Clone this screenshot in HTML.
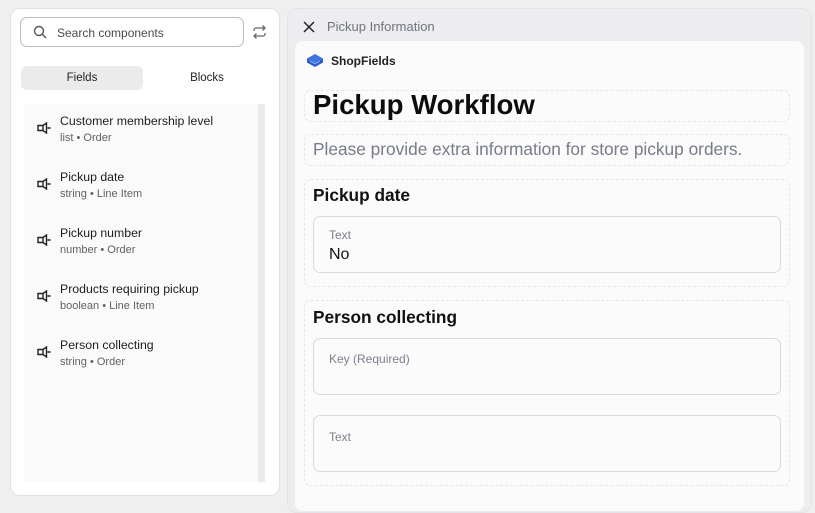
<!DOCTYPE html>
<html><head><style>
*{box-sizing:border-box;margin:0;padding:0}
body{width:815px;height:505px;background:#efeff0;font-family:"Liberation Sans",sans-serif;position:relative;overflow:hidden;color:#1a1a1a}
.a{position:absolute}
.left{left:10px;top:8px;width:270px;height:488px;background:#fff;border:1px solid #e2e2e4;border-radius:10px}
.search{left:20px;top:17px;width:224px;height:30px;border:1px solid #bdbdc2;border-radius:7px;font-size:12px;color:#4a4a4a}
.item{left:24px;width:234px;height:56px}
.item .t{position:absolute;left:36px;top:10px;font-size:12.3px;color:#1c1c1c}
.item .s{position:absolute;left:36px;top:28px;font-size:11px;color:#616161}
.item svg{position:absolute;left:13px;top:18px}
.dash{border:1px dashed #e6e6ea;border-radius:7px}
.field{border:1px solid #d9d9de;border-radius:7px;background:#fbfbfc}
.lbl{font-size:12px;color:#7b7f8e}
</style></head><body>
<div class="a left"></div>
<div class="a search">
<svg class="a" style="left:12px;top:7px" width="14" height="14" viewBox="0 0 14 14"><circle cx="6" cy="6" r="4.5" fill="none" stroke="#555" stroke-width="1.4"/><path d="M9.3 9.3L13 13" stroke="#555" stroke-width="1.4"/></svg>
<span class="a" style="left:36px;top:8px">Search components</span></div>
<svg class="a" style="left:252px;top:25px" width="15" height="14" viewBox="0 0 15 14" fill="none" stroke="#666" stroke-width="1.3"><path d="M2 6V5a2 2 0 0 1 2-2h9M10.5 0.5L13 3l-2.5 2.5M13 8v1a2 2 0 0 1-2 2H2M4.5 13.5L2 11l2.5-2.5"/></svg>
<div class="a" style="left:21px;top:66px;width:122px;height:24px;background:#ebebec;border-radius:6px;font-size:11.5px;text-align:center;line-height:24px;color:#222">Fields</div>
<div class="a" style="left:146px;top:66px;width:122px;height:24px;font-size:11.5px;text-align:center;line-height:24px;color:#222">Blocks</div>
<div class="a" style="left:24px;top:104px;width:241px;height:378px;background:#fafafa"></div>
<div class="a" style="left:258px;top:104px;width:7px;height:378px;background:#ebebeb"></div>
<div class="a item" style="top:104px"><svg width="14" height="12" viewBox="0 0 14 12" fill="none" stroke="#222" stroke-width="1.4"><path d="M1 3.5h5v5H1zM6 3.5L9.5 1v10L6 8.5M10.5 6h3"/></svg><div class="t">Customer membership level</div><div class="s">list • Order</div></div>
<div class="a item" style="top:160px"><svg width="14" height="12" viewBox="0 0 14 12" fill="none" stroke="#222" stroke-width="1.4"><path d="M1 3.5h5v5H1zM6 3.5L9.5 1v10L6 8.5M10.5 6h3"/></svg><div class="t">Pickup date</div><div class="s">string • Line Item</div></div>
<div class="a item" style="top:216px"><svg width="14" height="12" viewBox="0 0 14 12" fill="none" stroke="#222" stroke-width="1.4"><path d="M1 3.5h5v5H1zM6 3.5L9.5 1v10L6 8.5M10.5 6h3"/></svg><div class="t">Pickup number</div><div class="s">number • Order</div></div>
<div class="a item" style="top:272px"><svg width="14" height="12" viewBox="0 0 14 12" fill="none" stroke="#222" stroke-width="1.4"><path d="M1 3.5h5v5H1zM6 3.5L9.5 1v10L6 8.5M10.5 6h3"/></svg><div class="t">Products requiring pickup</div><div class="s">boolean • Line Item</div></div>
<div class="a item" style="top:328px"><svg width="14" height="12" viewBox="0 0 14 12" fill="none" stroke="#222" stroke-width="1.4"><path d="M1 3.5h5v5H1zM6 3.5L9.5 1v10L6 8.5M10.5 6h3"/></svg><div class="t">Person collecting</div><div class="s">string • Order</div></div>

<div class="a" style="left:287px;top:8px;width:525px;height:505px;background:#ededef;border:1px solid #e3e3e6;border-radius:10px"></div>
<svg class="a" style="left:303px;top:21px" width="12" height="12" viewBox="0 0 12 12"><path d="M1 1L11 11M11 1L1 11" stroke="#222" stroke-width="1.5"/></svg>
<div class="a" style="left:327px;top:19px;font-size:13px;color:#70737f">Pickup Information</div>
<div class="a" style="left:295px;top:41px;width:509px;height:470px;background:#fbfbfb;border-radius:8px"></div>
<svg class="a" style="left:306px;top:53px" width="18" height="16" viewBox="0 0 18 16"><path d="M9 1L17 5.5 9 10 1 5.5z" fill="#3f74e0"/><path d="M1 5.5v4L9 14l8-4.5v-4L9 10z" fill="#2a5bc7"/><path d="M4 8l5 3 5-3" stroke="#8fb0f0" stroke-width="0.8" fill="none"/></svg>
<div class="a" style="left:331px;top:54px;font-size:12px;font-weight:bold;color:#222">ShopFields</div>
<div class="a dash" style="left:304px;top:90px;width:486px;height:32px"></div>
<div class="a" style="left:313px;top:89px;font-size:27.6px;font-weight:bold;color:#0d0d0d">Pickup Workflow</div>
<div class="a dash" style="left:304px;top:134px;width:486px;height:32px"></div>
<div class="a" style="left:313px;top:139px;font-size:17.3px;color:#777b8b">Please provide extra information for store pickup orders.</div>
<div class="a dash" style="left:304px;top:179px;width:486px;height:108px"></div>
<div class="a" style="left:313px;top:185px;font-size:17.3px;font-weight:bold;color:#111">Pickup date</div>
<div class="a field" style="left:313px;top:216px;width:468px;height:57px"><span class="a lbl" style="left:15px;top:11px">Text</span><span class="a" style="left:15px;top:29px;font-size:16px;color:#111">No</span></div>
<div class="a dash" style="left:304px;top:300px;width:486px;height:186px"></div>
<div class="a" style="left:313px;top:307px;font-size:17.3px;font-weight:bold;color:#111">Person collecting</div>
<div class="a field" style="left:313px;top:338px;width:468px;height:57px"><span class="a lbl" style="left:15px;top:13px">Key (Required)</span></div>
<div class="a field" style="left:313px;top:415px;width:468px;height:57px"><span class="a lbl" style="left:15px;top:14px">Text</span></div>
</body></html>
